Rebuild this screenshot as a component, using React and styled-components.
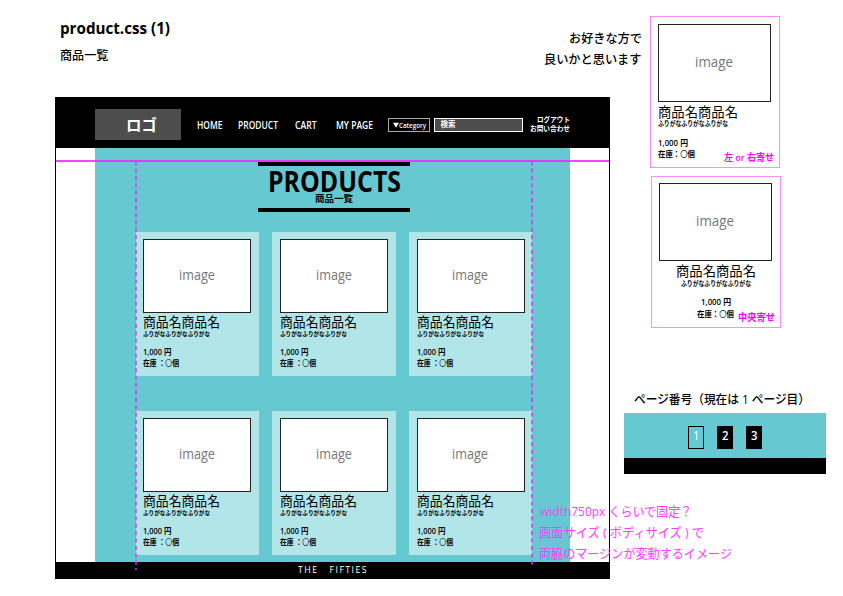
import React, { useLayoutEffect, useRef, useState } from "react";
import styled, { createGlobalStyle } from "styled-components";

const GlobalStyle = createGlobalStyle`
  *, *::before, *::after { box-sizing: border-box; }
  body { margin: 0; background: #fff; overflow: hidden; }
`;

const teal = "#66c8d0";
const paleTeal = "#b2e5e8";
const magenta = "#ff00ff";

/* ---------- text set to an exact measure ---------- */

const Measure = styled.div`
  flex: none;
  width: ${(p) => p.$w}px;
  height: ${(p) => p.$lh}px;
  line-height: ${(p) => p.$lh}px;
  margin: ${(p) => p.$m || "0"};
  font-family: "Open Sans", "Noto Sans CJK JP", sans-serif;
  font-size: ${(p) => p.$size}px;
  font-weight: ${(p) => p.$weight || 400};
  color: ${(p) => p.$color || "#000"};
  letter-spacing: ${(p) => p.$track || 0}px;
  white-space: pre;
`;

const Run = styled.span`
  display: inline-block;
  transform-origin: 0 50%;
  vertical-align: top;
`;

const Light = styled.span`
  font-weight: 400;
`;

function Text({ children, w, size, lh, weight, color, m, track }) {
  const ref = useRef(null);
  const [scale, setScale] = useState(1);
  useLayoutEffect(() => {
    const natural = ref.current.getBoundingClientRect().width / scale;
    if (natural) setScale(w / natural);
  }, [w, size]);
  return (
    <Measure $w={w} $size={size} $lh={lh || Math.ceil(size * 1.4)} $weight={weight} $color={color} $m={m} $track={track}>
      <Run ref={ref} style={{ transform: `scaleX(${scale})` }}>{children}</Run>
    </Measure>
  );
}

/* ---------- page frame ---------- */

const Page = styled.div`
  display: flex;
  width: 843px;
  height: 596px;
  background: #fff;
`;

const MainColumn = styled.main`
  flex: none;
  width: 642px;
`;

const TopRow = styled.header`
  display: flex;
  justify-content: space-between;
  height: 97px;
  padding: 0 0.5px 0 60px;
`;

const Heading = styled.div`
  padding-top: 16px;
`;

const Memo = styled.div`
  display: flex;
  flex-direction: column;
  align-items: flex-end;
  padding-top: 28px;
`;

const Mock = styled.section`
  position: relative;
  display: flex;
  flex-direction: column;
  width: 555px;
  height: 481.5px;
  margin-left: 55px;
  border: 1px solid #000;
`;

const NavBar = styled.nav`
  display: flex;
  align-items: center;
  flex: none;
  height: 50px;
  padding: 3px 0 0 39px;
  background: #000;
`;

const Logo = styled.div`
  display: flex;
  justify-content: center;
  align-items: center;
  width: 86px;
  height: 31px;
  padding-left: 6px;
  background: #4d4d4d;
`;

const CategoryBox = styled.div`
  display: flex;
  align-items: center;
  justify-content: center;
  width: 42px;
  height: 14px;
  margin-left: 15px;
  border: 1px solid #aaa;
`;

const Triangle = styled.svg`
  flex: none;
  width: 6px;
  height: 6px;
`;

const SearchBox = styled.div`
  display: flex;
  align-items: center;
  width: 89px;
  height: 14px;
  margin-left: 3.5px;
  padding-left: 6px;
  border: 1px solid #fff;
  background: #4d4d4d;
`;

const AccountLinks = styled.div`
  display: flex;
  flex-direction: column;
  align-items: flex-end;
  width: 40px;
  margin: -2px 0 0 7.5px;
`;

const Content = styled.div`
  flex: none;
  width: 475px;
  height: 414px;
  margin-left: 39px;
  padding-top: 13.5px;
  background: ${teal};
`;

const Title = styled.div`
  display: flex;
  flex-direction: column;
  align-items: center;
  width: 152px;
  height: 50.5px;
  margin: 0 0 20px 163px;
  border-top: 4px solid #000;
  border-bottom: 4px solid #000;
`;

const ProductGrid = styled.div`
  display: grid;
  grid-template-columns: repeat(3, 123.4px);
  grid-auto-rows: 144px;
  gap: 35.4px 13.2px;
  margin-left: 40.8px;
`;

const Card = styled.article`
  padding: 7px 0 0 7.65px;
  background: ${paleTeal};
`;

const Picture = styled.div`
  display: flex;
  align-items: center;
  justify-content: center;
  width: 108px;
  height: 73.5px;
  padding: 0 1px 2px 0;
  border: 1px solid #222;
  background: #fff;
`;

const MockFooter = styled.footer`
  display: flex;
  justify-content: center;
  align-items: center;
  flex: 1;
  padding-left: 1px;
  background: #000;
`;

/* ---------- annotations over the mock ---------- */

const GuideLine = styled.div`
  position: absolute;
  left: 0;
  right: 0;
  top: 62px;
  height: 1.5px;
  background: rgba(240, 40, 250, 0.85);
`;

const GuideColumn = styled.svg`
  position: absolute;
  top: 63px;
  left: ${(p) => p.$left}px;
  width: 2px;
  height: ${(p) => p.$height}px;
`;

const WidthNote = styled.div`
  position: absolute;
  left: 483px;
  top: 403px;
`;

/* ---------- side column ---------- */

const SideColumn = styled.aside`
  flex: none;
  width: 201px;
  padding-top: 16px;
`;

const Variant = styled.article`
  position: relative;
  display: flex;
  flex-direction: column;
  align-items: ${(p) => (p.$centered ? "center" : "flex-start")};
  width: 130px;
  height: 152px;
  margin: 0 0 8px ${(p) => (p.$centered ? 9 : 8)}px;
  padding: ${(p) => (p.$centered ? "6px 8px 0 7px" : "7px 7px 0")};
  border: 1px solid #ff8cff;
`;

const VariantPicture = styled(Picture)`
  width: 113px;
  height: 77.5px;
  padding: 0 2px 3px 0;
`;

const VariantTag = styled.div`
  position: absolute;
  right: 5px;
  bottom: 2px;
`;

const Pagination = styled.section`
  width: 202px;
  margin: 63px 0 0 -18px;
`;

const Pages = styled.div`
  display: flex;
  justify-content: center;
  gap: 13px;
  height: 45.5px;
  margin-top: 3.5px;
  padding-top: 13px;
  background: ${teal};
`;

const PageButton = styled.div`
  display: flex;
  justify-content: center;
  align-items: center;
  width: 16px;
  height: 23px;
  padding-bottom: 3px;
  border: 1px solid #000;
  background: ${(p) => (p.$current ? "transparent" : "#000")};
`;

const BottomBar = styled.div`
  height: 16px;
  background: #000;
`;

function Product() {
  return (
    <Card>
      <Picture><Text w={36} size={14.5} lh={20} color="#777">image</Text></Picture>
      <Text w={77} size={13.2} lh={18}>商品名商品名</Text>
      <Text w={67} size={6} lh={8} weight={600} m="-1px 0 0">ふりがなふりがなふりがな</Text>
      <Text w={28.5} size={8} lh={11} weight={600} m="8.6px 0 0">1,000 円</Text>
      <Text w={36} size={7.8} lh={11} weight={600} m="0.5px 0 0">在庫 ：<Light>〇</Light>個</Text>
    </Card>
  );
}

function Guide({ left, height }) {
  return (
    <GuideColumn $left={left} $height={height}>
      <line x1="1" x2="1" y1="0" y2={height} stroke="#e030f0" strokeWidth="1.5" strokeDasharray="4.2 3.2" />
    </GuideColumn>
  );
}

export default function App() {
  return (
    <Page>
      <GlobalStyle />
      <MainColumn>
        <TopRow>
          <Heading>
            <Text w={110} size={16.5} lh={24} weight={700}>product.css (1)</Text>
            <Text w={48.5} size={12} lh={18} weight={500} m="7px 0 0">商品一覧</Text>
          </Heading>
          <Memo>
            <Text w={73} size={12.5} lh={21} weight={500}>お好きな方で</Text>
            <Text w={97.5} size={12.5} lh={21} weight={500}>良いかと思います</Text>
          </Memo>
        </TopRow>

        <Mock>
          <NavBar>
            <Logo><Text w={31} size={15.5} lh={22} weight={700} color="#fff">ロゴ</Text></Logo>
            <Text w={25.5} size={10.5} lh={14} weight={600} color="#fff" m="0 0 0 15.5px">HOME</Text>
            <Text w={40} size={10.5} lh={14} weight={600} color="#fff" m="0 0 0 15.5px">PRODUCT</Text>
            <Text w={21.5} size={10.5} lh={14} weight={600} color="#fff" m="0 0 0 17.5px">CART</Text>
            <Text w={37} size={10.5} lh={14} weight={600} color="#fff" m="0 0 0 19.5px">MY PAGE</Text>
            <CategoryBox>
              <Triangle viewBox="0 0 6 6"><path d="M0 0.7H6L3 5.8Z" fill="#fff" /></Triangle>
              <Text w={27} size={7.5} lh={10} weight={600} color="#fff" m="1px 0 0">Category</Text>
            </CategoryBox>
            <SearchBox><Text w={15} size={7.5} lh={11} weight={700} color="#fff">検索</Text></SearchBox>
            <AccountLinks>
              <Text w={33} size={7.3} lh={9} weight={600} color="#fff">ログアウト</Text>
              <Text w={40} size={7.3} lh={9} weight={600} color="#fff">お問い合わせ</Text>
            </AccountLinks>
          </NavBar>

          <Content>
            <Title>
              <Text w={133} size={29} lh={30} weight={700}>PRODUCTS</Text>
              <Text w={38} size={9.5} lh={11} weight={600} m="-3px 0 0">商品一覧</Text>
            </Title>
            <ProductGrid>
              {[0, 1, 2, 3, 4, 5].map((id) => <Product key={id} />)}
            </ProductGrid>
          </Content>

          <MockFooter>
            <Text w={70} size={9.2} lh={13} color="#fff" weight={500} track={1.5}>THE   FIFTIES</Text>
          </MockFooter>

          <GuideLine />
          <Guide left={79} height={409} />
          <Guide left={475} height={404} />
          <WidthNote>
            <Text w={152} size={12.8} lh={21} color="#ff40ff" m="0 0 0 1px">width750px くらいで固定？</Text>
            <Text w={165} size={12.8} lh={21} color="#ff40ff">画面サイズ ( ボディサイズ ) で</Text>
            <Text w={193} size={12.8} lh={21} color="#ff40ff">両脇のマージンが変動するイメージ</Text>
          </WidthNote>
        </Mock>
      </MainColumn>

      <SideColumn>
        <Variant>
          <VariantPicture><Text w={38} size={15} lh={20} color="#777">image</Text></VariantPicture>
          <Text w={80} size={13.8} lh={20}>商品名商品名</Text>
          <Text w={70} size={6.3} lh={8} weight={600} m="-2px 0 0">ふりがなふりがなふりがな</Text>
          <Text w={30} size={8.3} lh={11} weight={600} m="9px 0 0">1,000 円</Text>
          <Text w={37} size={8} lh={11} weight={600}>在庫：<Light>〇</Light>個</Text>
          <VariantTag><Text w={50} size={9.7} lh={14} weight={600} color={magenta}>左 or 右寄せ</Text></VariantTag>
        </Variant>
        <Variant $centered>
          <VariantPicture><Text w={38} size={15} lh={20} color="#777">image</Text></VariantPicture>
          <Text w={80} size={13.8} lh={20}>商品名商品名</Text>
          <Text w={70} size={6.3} lh={8} weight={600} m="-1px 0 0">ふりがなふりがなふりがな</Text>
          <Text w={30} size={8.3} lh={11} weight={600} m="8px 0 0">1,000 円</Text>
          <Text w={37} size={8} lh={11} weight={600} m="1px 0 0">在庫：<Light>〇</Light>個</Text>
          <VariantTag><Text w={37} size={9.7} lh={14} weight={600} color={magenta}>中央寄せ</Text></VariantTag>
        </Variant>

        <Pagination>
          <Text w={176} size={12.5} lh={18} weight={500} m="0 0 0 10px">ページ番号（現在は 1 ページ目）</Text>
          <Pages>
            <PageButton $current><Text w={6.5} size={12.5} lh={16} color="#fff">1</Text></PageButton>
            <PageButton><Text w={6.5} size={12.5} lh={16} weight={600} color="#fff">2</Text></PageButton>
            <PageButton><Text w={6.5} size={12.5} lh={16} weight={600} color="#fff">3</Text></PageButton>
          </Pages>
          <BottomBar />
        </Pagination>
      </SideColumn>
    </Page>
  );
}
